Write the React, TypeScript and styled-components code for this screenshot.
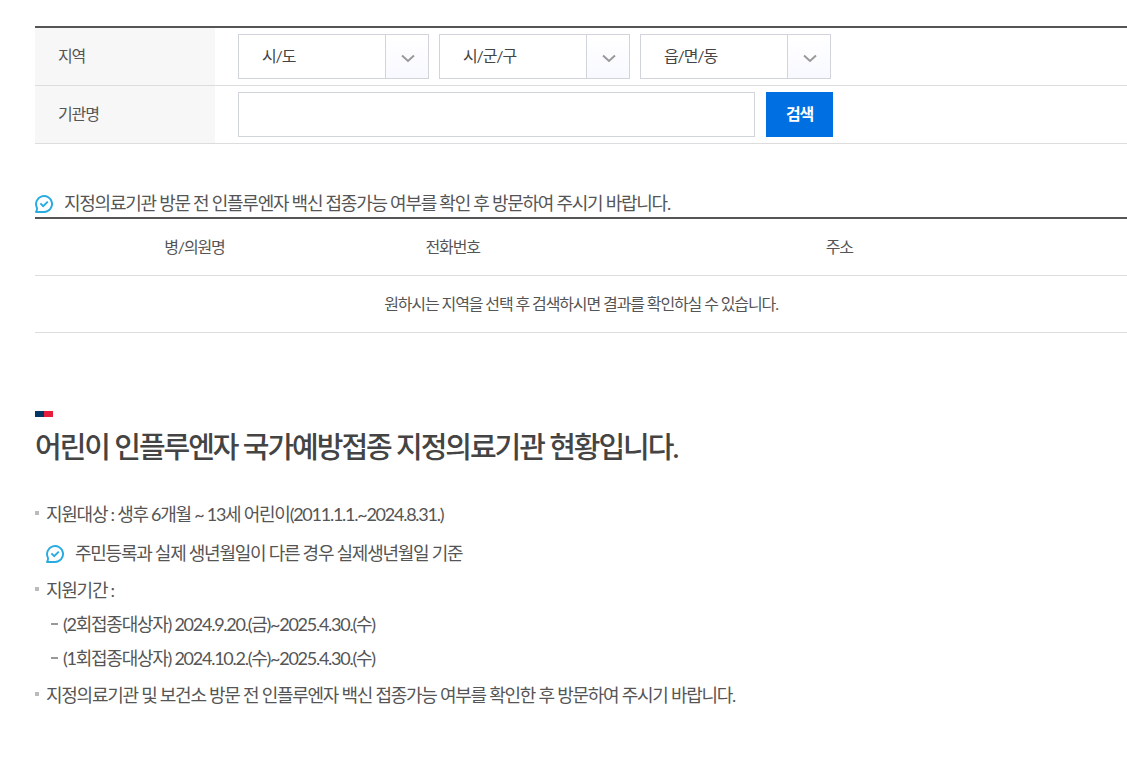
import React from "react";
import styled, { createGlobalStyle } from "styled-components";

const GlobalStyle = createGlobalStyle`
  *, *::before, *::after { box-sizing: border-box; letter-spacing: -0.07em; }
  body {
    margin: 0;
    background: #fff;
    color: #555;
    font-family: Lato, "Noto Sans CJK KR", sans-serif;
    font-size: 16px;
    line-height: 24px;
  }
  input, select, button { font: inherit; color: inherit; }
`;

const Page = styled.main`
  padding: 26px 0 64px 35px;
`;

const SearchForm = styled.form`
  border-top: 2px solid #555;
`;

const Field = styled.div`
  display: grid;
  grid-template-columns: 180px 1fr;
  border-bottom: 1px solid #ddd;
`;

const FieldName = styled.label`
  display: flex;
  align-items: center;
  padding: 0 0 2px 23px;
  background: #f7f7f7;
`;

const Controls = styled.div<{ $gap: number }>`
  display: flex;
  gap: ${(p) => p.$gap}px;
  padding: 6px 23px;
`;

const SelectBox = styled.div`
  display: grid;
  grid-template-columns: 1fr 43px;
  width: 191px;
  height: 45px;
  border: 1px solid #d2d4dc;
`;

const Select = styled.select`
  grid-area: 1 / 1 / 2 / 3;
  appearance: none;
  width: 100%;
  border: 0;
  padding: 0 43px 2px 23px;
  background: transparent;
  color: #444;
`;

const Arrow = styled.span`
  grid-area: 1 / 2 / 2 / 3;
  display: flex;
  align-items: center;
  justify-content: center;
  padding: 3px 0 0 1px;
  border-left: 1px solid #d2d4dc;
  background: linear-gradient(#fff, #f8f9ff);
  pointer-events: none;
`;

const TextInput = styled.input`
  flex: 0 1 517px;
  min-width: 0;
  height: 45px;
  border: 1px solid #d2d4dc;
  padding: 0 12px;
  background: #fff;
`;

const SearchButton = styled.button`
  flex: none;
  width: 67px;
  height: 45px;
  border: 0;
  padding: 0 0 2px;
  background: #006fe2;
  color: #fff;
  font-weight: 700;
  cursor: pointer;
`;

const Note = styled.p`
  display: flex;
  align-items: center;
  gap: 11px;
  margin: 0;
  font-size: 18px;
  line-height: 28px;

  svg { flex: none; margin-top: 2px; }
`;

const Results = styled.section`
  margin-top: 45px;
`;

const ResultTable = styled.table`
  width: 100%;
  table-layout: fixed;
  border-collapse: separate;
  border-spacing: 0;
  border-top: 2px solid #555;

  th, td {
    padding: 16px 0;
    border-bottom: 1px solid #ddd;
    font-weight: 400;
    text-align: center;
  }
`;

const Column = styled.col<{ $width: string }>`
  width: ${(p) => p.$width};
`;

const Status = styled.section`
  margin-top: 78px;
`;

const Flag = styled.div`
  width: 18px;
  height: 6px;
  background: linear-gradient(90deg, #003764 50%, #e61e3c 50%);
`;

const Title = styled.h2`
  margin: 8px 0 0;
  font-size: 29px;
  font-weight: 500;
  line-height: 44px;
  color: #444;
`;

const BulletList = styled.ul`
  display: grid;
  gap: 3px;
  margin: 28px 0 0;
  padding: 0;
  list-style: none;
  font-size: 18px;
  line-height: 34px;
`;

const Bullet = styled.li`
  display: grid;
  grid-template-columns: 4px 1fr;
  column-gap: 7px;

  &::before {
    content: "";
    height: 4px;
    margin-top: 14px;
    background: #bbb;
  }

  ${Note} {
    margin-top: 5px;
    line-height: 34px;
  }
`;

const DashList = styled.ul`
  margin: 0;
  padding: 0 0 0 5px;
  list-style: none;
`;

const Dash = styled.li`
  display: flex;
  gap: 5px;

  &::before {
    content: "";
    flex: none;
    width: 7px;
    height: 2px;
    margin-top: 16px;
    background: #999;
  }
`;

const CheckBubble = () => (
  <svg width="18" height="18" viewBox="0 0 18 18" fill="none" aria-hidden="true">
    <path
      d="M1 17h8.2A8 8 0 1 0 1.8 12.4C2.3 13.6 2 15.2 1 17Z"
      stroke="#29abe2"
      strokeWidth="1.9"
      strokeLinejoin="round"
    />
    <path d="M5.4 8.4l2.8 2.7 4.6-4.5" stroke="#29abe2" strokeWidth="2" />
  </svg>
);

const RegionSelect = ({ id, label }: { id: string; label: string }) => (
  <SelectBox>
    <Arrow>
      <svg width="14" height="9" viewBox="0 0 14 9" fill="none" aria-hidden="true">
        <path d="M1 1.5l6 5.5 6-5.5" stroke="#999" strokeWidth="2" />
      </svg>
    </Arrow>
    <Select id={id} aria-label={label}>
      <option>{label}</option>
    </Select>
  </SelectBox>
);

export default function App() {
  return (
    <>
      <GlobalStyle />
      <Page>
        <SearchForm onSubmit={(e) => e.preventDefault()}>
          <Field>
            <FieldName htmlFor="sido">지역</FieldName>
            <Controls $gap={10}>
              <RegionSelect id="sido" label="시/도" />
              <RegionSelect id="sigungu" label="시/군/구" />
              <RegionSelect id="dong" label="읍/면/동" />
            </Controls>
          </Field>
          <Field>
            <FieldName htmlFor="org">기관명</FieldName>
            <Controls $gap={11}>
              <TextInput id="org" type="text" />
              <SearchButton type="submit">검색</SearchButton>
            </Controls>
          </Field>
        </SearchForm>

        <Results>
          <Note>
            <CheckBubble />
            <span>지정의료기관 방문 전 인플루엔자 백신 접종가능 여부를 확인 후 방문하여 주시기 바랍니다.</span>
          </Note>
          <ResultTable>
            <colgroup>
              <Column $width="29.2%" />
              <Column $width="18.1%" />
              <Column $width="52.7%" />
            </colgroup>
            <thead>
              <tr>
                <th scope="col">병/의원명</th>
                <th scope="col">전화번호</th>
                <th scope="col">주소</th>
              </tr>
            </thead>
            <tbody>
              <tr>
                <td colSpan={3}>원하시는 지역을 선택 후 검색하시면 결과를 확인하실 수 있습니다.</td>
              </tr>
            </tbody>
          </ResultTable>
        </Results>

        <Status>
          <Flag />
          <Title>어린이 인플루엔자 국가예방접종 지정의료기관 현황입니다.</Title>
          <BulletList>
            <Bullet>
              <div>
                지원대상 : 생후 6개월 ~ 13세 어린이(2011.1.1.~2024.8.31.)
                <Note>
                  <CheckBubble />
                  <span>주민등록과 실제 생년월일이 다른 경우 실제생년월일 기준</span>
                </Note>
              </div>
            </Bullet>
            <Bullet>
              <div>
                지원기간 :
                <DashList>
                  <Dash>(2회접종대상자) 2024.9.20.(금)~2025.4.30.(수)</Dash>
                  <Dash>(1회접종대상자) 2024.10.2.(수)~2025.4.30.(수)</Dash>
                </DashList>
              </div>
            </Bullet>
            <Bullet>
              <div>지정의료기관 및 보건소 방문 전 인플루엔자 백신 접종가능 여부를 확인한 후 방문하여 주시기 바랍니다.</div>
            </Bullet>
          </BulletList>
        </Status>
      </Page>
    </>
  );
}
